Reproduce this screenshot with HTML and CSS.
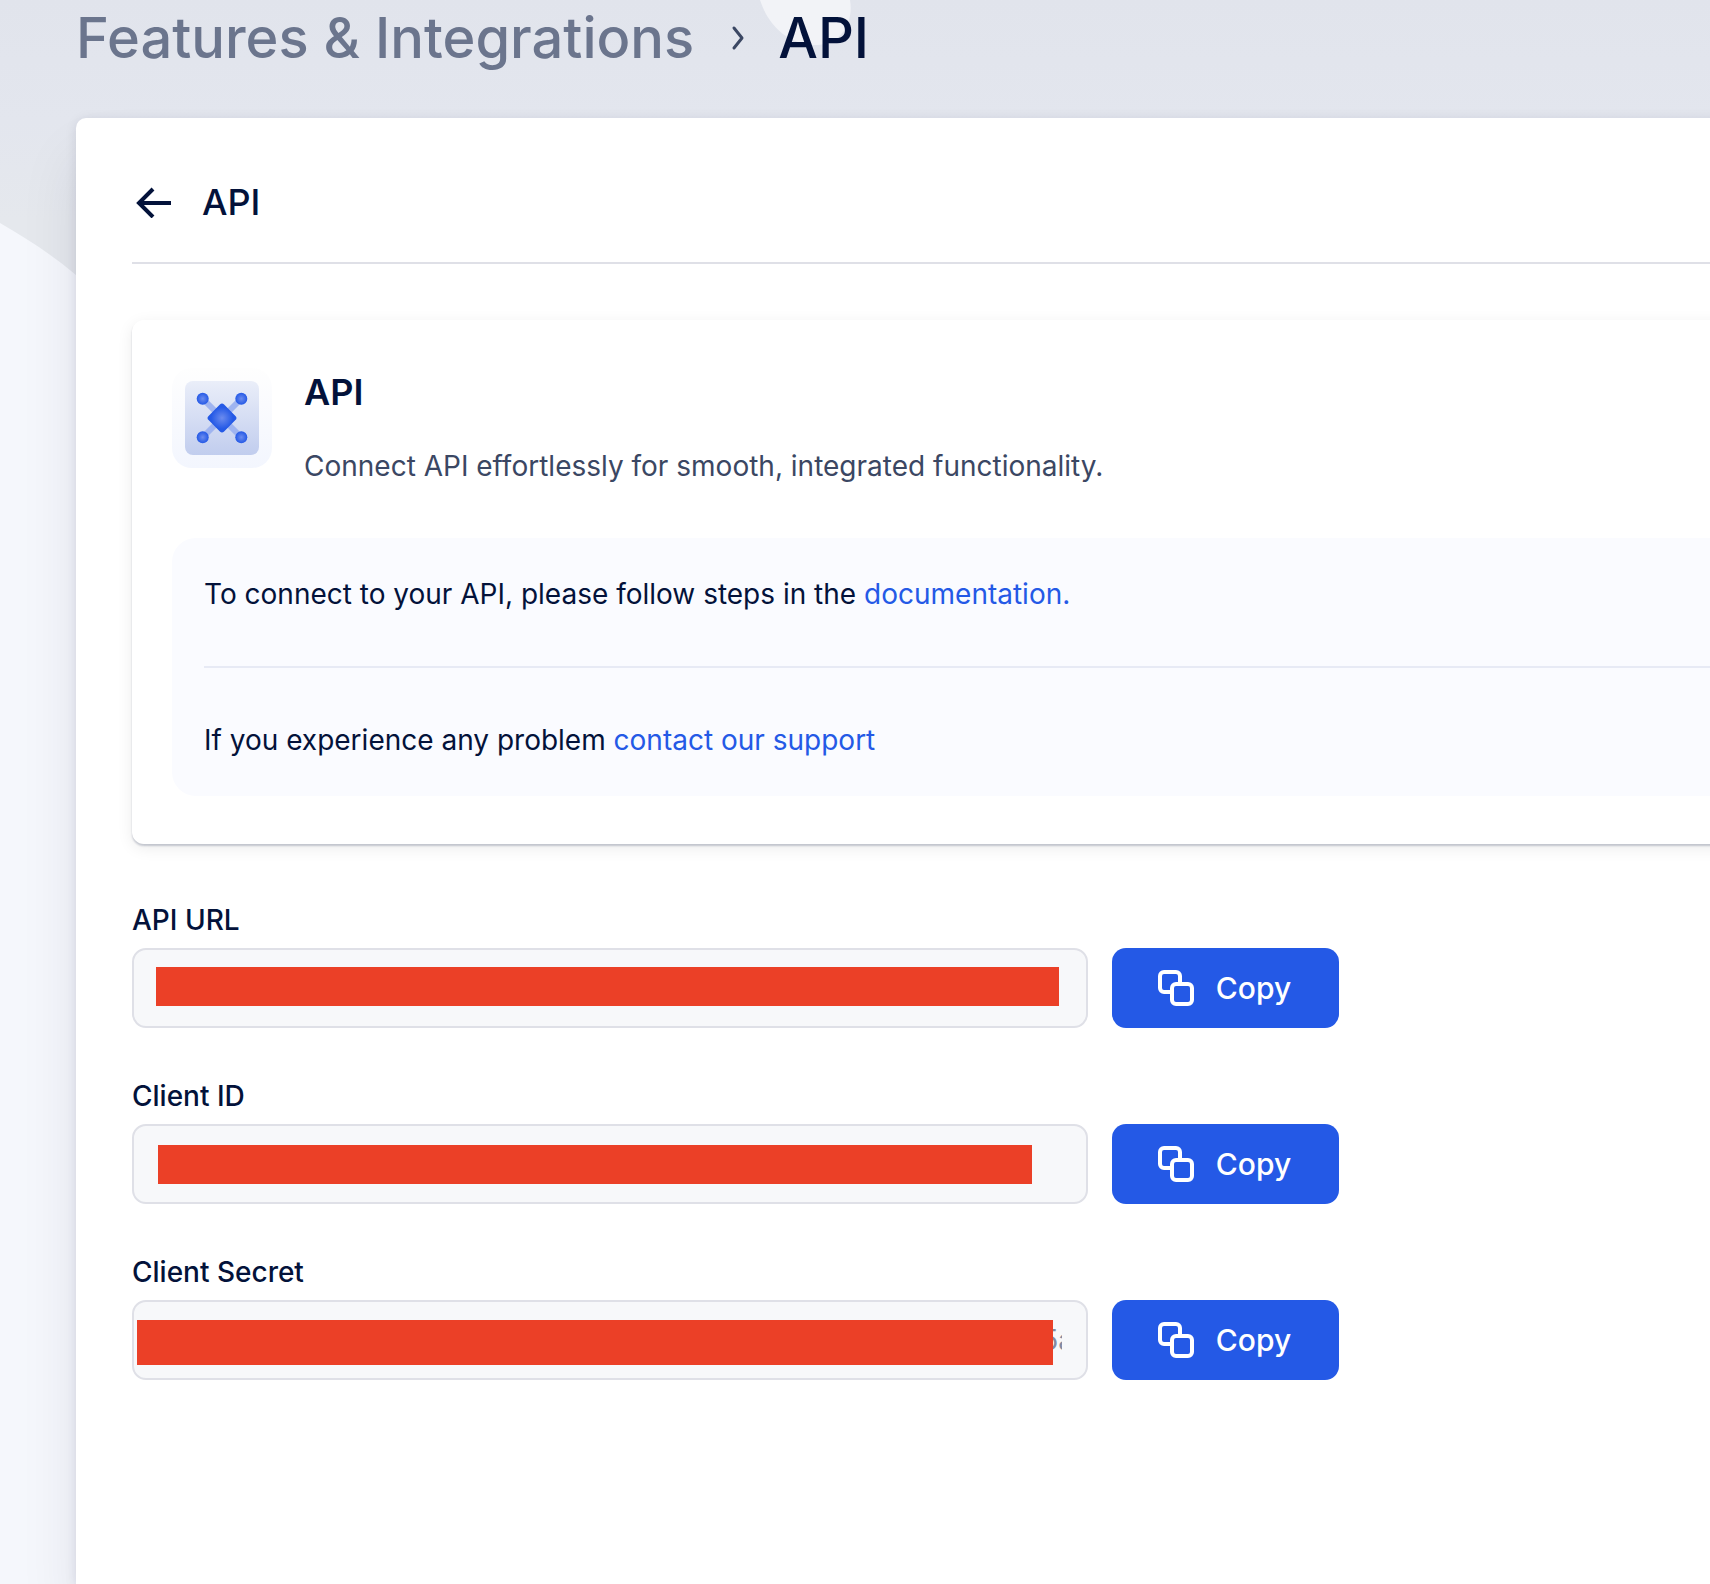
FILE: index.html
```
<!DOCTYPE html>
<html lang="en">
<head>
    <meta charset="UTF-8">
    <meta name="viewport" content="width=device-width, initial-scale=1.0">
    <title>Features &amp; Integrations - API</title>
    <link rel="stylesheet" href="styles.css">
</head>
<body>

<!-- Background shapes -->
<svg class="bg-shapes" width="900" height="1584" viewBox="0 0 900 1584" aria-hidden="true">
    <path d="M760 0C768 24 786 45 818 45C840 44 854 24 850 0Z" fill="#f2f3f7"/>
    <path d="M0 223C26 238 51 254 76 275C200 370 260 500 260 700V1584H0Z" fill="#f5f7fc"/>
</svg>

<!-- Breadcrumb -->
<nav class="breadcrumb">
    <a href="#">Features &amp; Integrations</a>
    <svg width="16" height="26" viewBox="0 0 16 26" aria-hidden="true">
        <path d="M6 3L14 13L6 23" fill="none" stroke="#3b4763" stroke-width="3" stroke-linecap="round" stroke-linejoin="round"/>
    </svg>
    <h1>API</h1>
</nav>

<!-- Panel -->
<main class="panel">
    <header class="panel-header">
        <button class="back" type="button" aria-label="Back">
            <svg width="36" height="32" viewBox="0 0 36 32" aria-hidden="true">
                <path d="M35 17H3M17 3L3 17L17 31" fill="none" stroke="#03123a" stroke-width="4"/>
            </svg>
        </button>
        <h2>API</h2>
    </header>

    <section class="card">
        <div class="card-top">
            <div class="card-icon">
                <svg width="74" height="74" viewBox="0 0 74 74" aria-hidden="true">
                    <defs>
                        <linearGradient id="tile" x1="0" y1="0" x2="0" y2="1">
                            <stop offset="0" stop-color="#eaeef9"/>
                            <stop offset="1" stop-color="#c1cdee"/>
                        </linearGradient>
                        <radialGradient id="node">
                            <stop offset="0" stop-color="#6b8bee"/>
                            <stop offset="1" stop-color="#2459e6"/>
                        </radialGradient>
                    </defs>
                    <rect width="74" height="74" rx="8" fill="url(#tile)"/>
                    <path d="M18 18L56 56M56 18L18 56" stroke="#9fb4f0" stroke-width="6"/>
                    <circle cx="17.700" cy="17.700" r="6" fill="url(#node)"/>
                    <circle cx="56.300" cy="17.700" r="6" fill="url(#node)"/>
                    <circle cx="17.700" cy="56.300" r="6" fill="url(#node)"/>
                    <circle cx="56.300" cy="56.300" r="6" fill="url(#node)"/>
                    <rect x="26" y="26" width="22" height="22" rx="3" transform="rotate(45 37 37)" fill="url(#node)"/>
                </svg>
            </div>
            <div class="card-text">
                <h3>API</h3>
                <p>Connect API effortlessly for smooth, integrated functionality.</p>
            </div>
        </div>
        <div class="info">
            <p>To connect to your API, please follow steps in the <a href="#">documentation.</a></p>
            <p>If you experience any problem <a href="#">contact our support</a></p>
        </div>
    </section>

    <form class="fields">
        <div class="field">
            <label for="api-url">API URL</label>
            <div class="field-row">
                <div class="input-box">
                    <input id="api-url" type="text" readonly>
                    <span class="mask mask-url"></span>
                </div>
                <button class="copy" type="button">
                    <svg width="36" height="36" viewBox="0 0 36 36" aria-hidden="true">
                        <path d="M12 22H6a4 4 0 0 1-4-4V6a4 4 0 0 1 4-4H18a4 4 0 0 1 4 4V12" fill="none" stroke="#fff" stroke-width="4"/>
                        <rect x="14" y="14" width="20" height="20" rx="4" fill="none" stroke="#fff" stroke-width="4"/>
                    </svg>
                    Copy
                </button>
            </div>
        </div>
        <div class="field">
            <label for="client-id">Client ID</label>
            <div class="field-row">
                <div class="input-box">
                    <input id="client-id" type="text" readonly>
                    <span class="mask mask-id"></span>
                </div>
                <button class="copy" type="button">
                    <svg width="36" height="36" viewBox="0 0 36 36" aria-hidden="true">
                        <path d="M12 22H6a4 4 0 0 1-4-4V6a4 4 0 0 1 4-4H18a4 4 0 0 1 4 4V12" fill="none" stroke="#fff" stroke-width="4"/>
                        <rect x="14" y="14" width="20" height="20" rx="4" fill="none" stroke="#fff" stroke-width="4"/>
                    </svg>
                    Copy
                </button>
            </div>
        </div>
        <div class="field">
            <label for="client-secret">Client Secret</label>
            <div class="field-row">
                <div class="input-box">
                    <input id="client-secret" type="text" value="000000000000000000000000000000000000000000000000005a" readonly>
                    <span class="mask mask-secret"></span>
                </div>
                <button class="copy" type="button">
                    <svg width="36" height="36" viewBox="0 0 36 36" aria-hidden="true">
                        <path d="M12 22H6a4 4 0 0 1-4-4V6a4 4 0 0 1 4-4H18a4 4 0 0 1 4 4V12" fill="none" stroke="#fff" stroke-width="4"/>
                        <rect x="14" y="14" width="20" height="20" rx="4" fill="none" stroke="#fff" stroke-width="4"/>
                    </svg>
                    Copy
                </button>
            </div>
        </div>
    </form>
</main>

</body>
</html>
```
FILE: styles.css
```
* {
    box-sizing: border-box;
}

body {
    font-family: Inter, "Liberation Sans", sans-serif;
    font-size: 28px;
    line-height: 40px;
    color: #03123a;
    margin: 0;
    min-height: 100vh;
    display: flex;
    flex-direction: column;
    background: linear-gradient(#e1e4ec, #e3e6ee 120px, #e5e8ed 220px);
    overflow-x: hidden;
}

h1, h2, h3, p {
    margin: 0;
}

a {
    color: #2459e6;
    text-decoration: none;
}

/* Decorative shapes behind the page */
.bg-shapes {
    position: absolute;
    top: 0;
    left: 0;
    z-index: -1;
}

/* Breadcrumb */
.breadcrumb {
    display: flex;
    align-items: center;
    gap: 34px;
    padding: 0 76px;
    height: 76px;
}

.breadcrumb a,
.breadcrumb h1 {
    font-size: 56px;
    font-weight: 500;
    line-height: 76px;
}

.breadcrumb a {
    color: #6b758d;
}

/* Panel runs off the right side of the window */
.panel {
    flex: 1;
    margin: 42px -80px 0 76px;
    padding: 56px 0 56px 56px;
    background-color: white;
    border-radius: 10px 10px 0 0;
    box-shadow: 0 2px 12px rgba(20, 24, 60, 0.1), 0 40px 60px rgba(20, 24, 60, 0.09);
}

.panel-header {
    display: flex;
    align-items: center;
    gap: 30px;
    padding: 4px 4px 36px;
    border-bottom: 2px solid #dfe0e7;
}

.panel-header h2 {
    font-size: 36px;
    font-weight: 500;
    line-height: 48px;
}

.back {
    display: flex;
    padding: 0;
    border: none;
    background: none;
    cursor: pointer;
}

/* Card */
.card {
    margin-top: 56px;
    padding: 48px 0 48px 40px;
    border-radius: 12px;
    box-shadow: 0 2px 2px rgba(3, 18, 58, 0.2), 0 4px 16px rgba(0, 0, 0, 0.08);
}

.card-top {
    display: flex;
    gap: 32px;
}

.card-icon {
    display: flex;
    align-items: center;
    justify-content: center;
    width: 100px;
    height: 100px;
    border-radius: 20px;
    background: linear-gradient(#fefefe, #f3f6fe);
}

.card-text h3 {
    font-size: 36px;
    font-weight: 600;
    line-height: 48px;
    margin-bottom: 30px;
}

.card-text p {
    color: #3b4763;
}

.info {
    margin-top: 52px;
    padding-left: 32px;
    border-radius: 24px;
    background-color: #fafbff;
}

.info p {
    padding: 36px 0 52px;
}

.info p + p {
    padding: 52px 0 36px;
    border-top: 2px solid #e7eaf5;
}

/* Fields */
.fields {
    display: flex;
    flex-direction: column;
    gap: 48px;
    margin-top: 56px;
}

.field {
    display: flex;
    flex-direction: column;
    gap: 8px;
}

.field label {
    font-weight: 500;
}

.field-row {
    display: flex;
    gap: 24px;
}

.input-box {
    position: relative;
    width: 956px;
}

.input-box input {
    display: block;
    width: 100%;
    height: 80px;
    padding: 0 24px;
    border: 2px solid #dfe0e7;
    border-radius: 14px;
    background-color: #f7f8fa;
    color: #838ba0;
    font-family: inherit;
    font-size: 28px;
}

/* Bars covering the private values */
.mask {
    position: absolute;
    background-color: #eb4027;
}

.mask-url {
    top: 19px;
    bottom: 22px;
    left: 24px;
    right: 29px;
}

.mask-id {
    top: 21px;
    bottom: 20px;
    left: 26px;
    right: 56px;
}

.mask-secret {
    top: 20px;
    bottom: 15px;
    left: 5px;
    right: 35px;
}

.copy {
    display: flex;
    align-items: center;
    justify-content: center;
    gap: 22px;
    width: 227px;
    height: 80px;
    padding: 0 2px 0 0;
    border: none;
    border-radius: 14px;
    background-color: #2459e6;
    color: white;
    font-family: inherit;
    font-size: 30px;
    font-weight: 500;
    cursor: pointer;
}

.copy:hover {
    background-color: #1c4bc9;
}
```
